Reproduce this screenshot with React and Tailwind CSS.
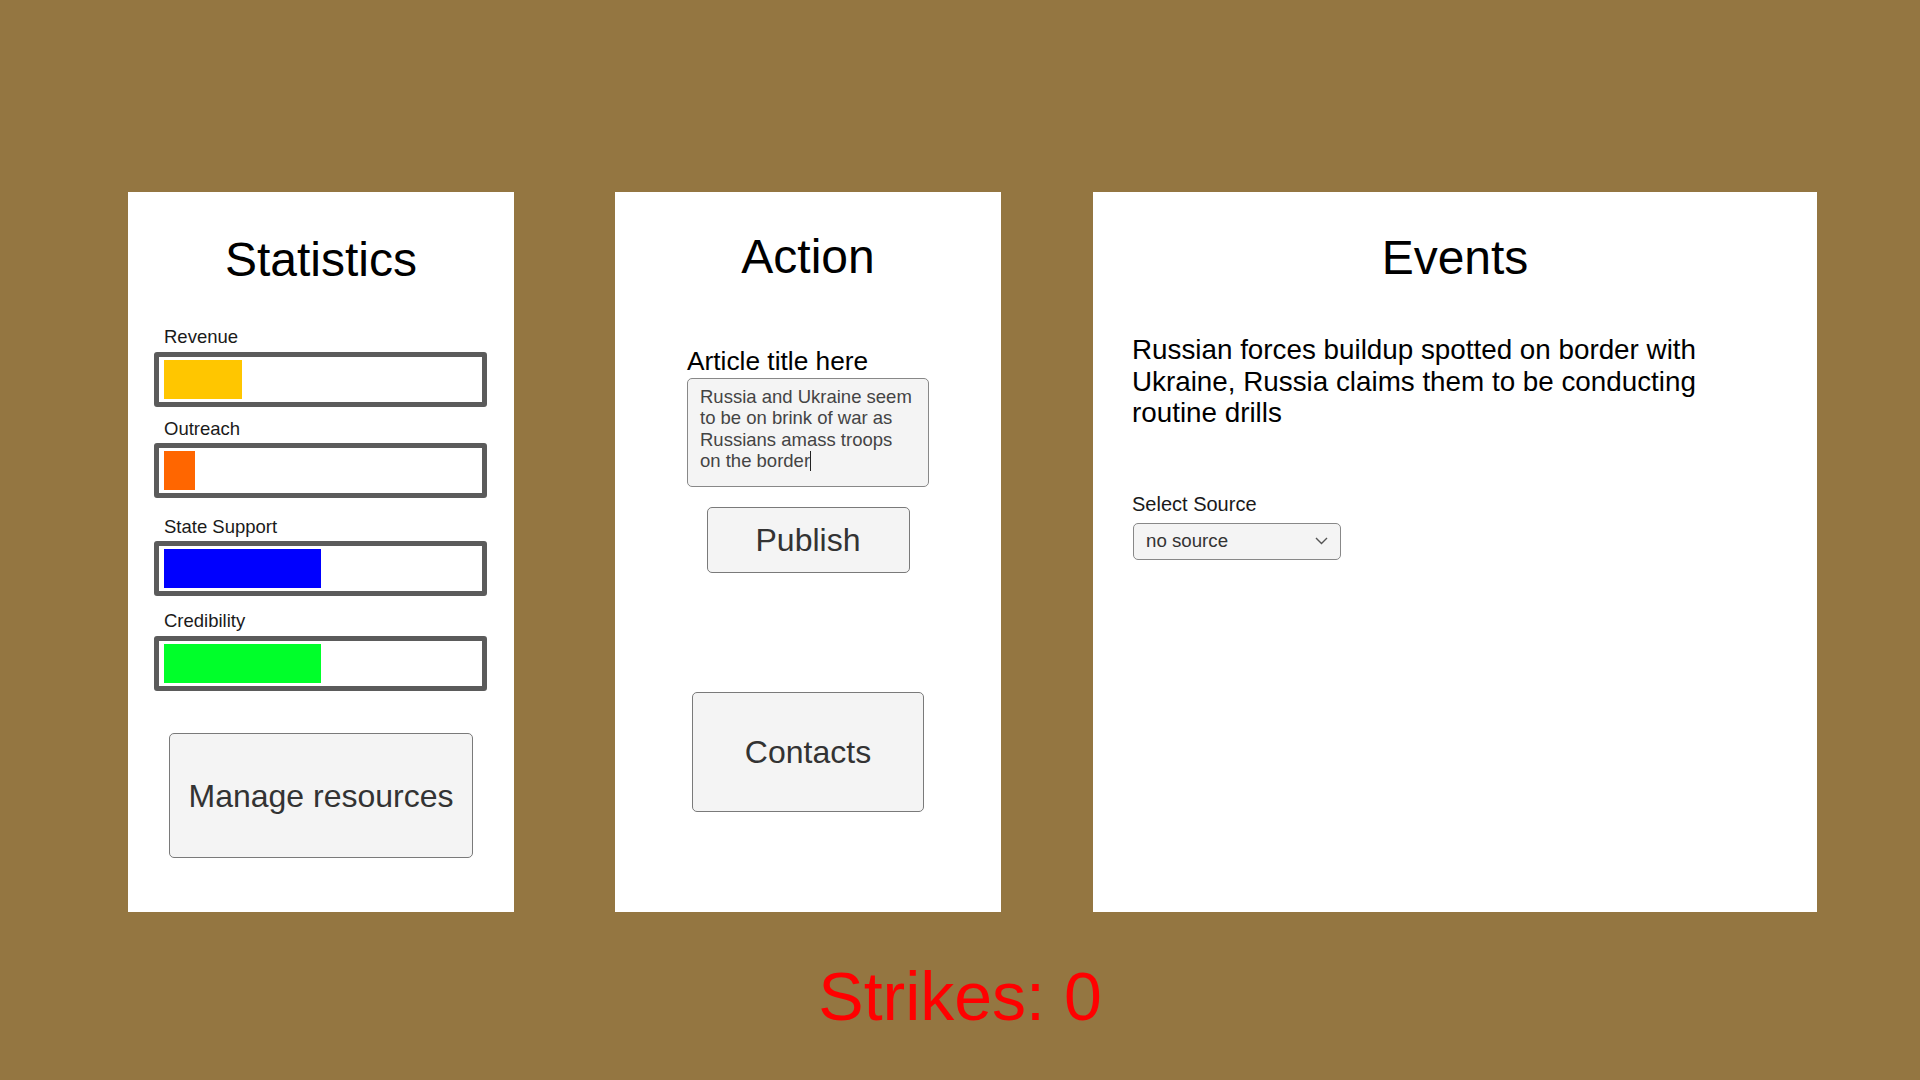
import React from "react";

const FONT = { fontFamily: '"Liberation Sans", Arial, sans-serif' };

function StatBar({ label, fill, color, labelMt, barMt }) {
  return (
    <div className={labelMt}>
      <div className="ml-[10px] text-[18.5px] leading-[20px] text-[#1a1a1a]">{label}</div>
      <div className={`${barMt} h-[55px] w-[333px] rounded-[3px] border-[5px] border-[#5b5b5b] bg-white pl-[5px] py-[3px]`}>
        <div className="h-full" style={{ width: fill, backgroundColor: color }} />
      </div>
    </div>
  );
}

export default function App() {
  return (
    <div className="min-h-screen w-full bg-[#947641] flex flex-col" style={FONT}>
      <div className="flex pl-[128px] pt-[192px]">
        {/* Statistics */}
        <div className="w-[386px] h-[720px] bg-white flex flex-col pt-[40px]">
          <div className="text-center text-[48px] leading-[56px] text-black">Statistics</div>
          <div className="px-[26px]">
            <StatBar label="Revenue" fill={78} color="#ffc600" labelMt="mt-[39px]" barMt="mt-[5px]" />
            <StatBar label="Outreach" fill={31} color="#ff6600" labelMt="mt-[12px]" barMt="mt-[4px]" />
            <StatBar label="State Support" fill={157} color="#0000ff" labelMt="mt-[19px]" barMt="mt-[4px]" />
            <StatBar label="Credibility" fill={157} color="#00ff2a" labelMt="mt-[15px]" barMt="mt-[5px]" />
          </div>
          <div className="mt-[42px] flex justify-center">
            <div className="w-[304px] h-[125px] rounded-[5px] border border-[#7a7a7a] bg-[#f4f4f4] flex items-center justify-center text-[32px] text-[#333]">
              Manage resources
            </div>
          </div>
        </div>

        {/* Action */}
        <div className="ml-[101px] w-[386px] h-[720px] bg-white flex flex-col items-center pt-[37px]">
          <div className="text-center text-[48px] leading-[56px] text-black">Action</div>
          <div className="mt-[61px] w-[242px]">
            <div className="text-[26.3px] leading-[30px] text-black">Article title here</div>
            <div className="mt-[2px] h-[109px] w-[242px] rounded-[5px] border border-[#888] bg-[#f4f4f4] pt-[7px] px-[12px] text-[18.5px] leading-[21.3px] text-[#444]">
              Russia and Ukraine seem to be on brink of war as Russians amass troops on the border
              <span className="inline-block w-px h-[20px] bg-[#222] align-[-4px]" />
            </div>
          </div>
          <div className="mt-[20px] w-[203px] h-[66px] rounded-[5px] border border-[#7a7a7a] bg-[#f4f4f4] flex items-center justify-center text-[32px] text-[#333]">
            Publish
          </div>
          <div className="mt-[119px] w-[232px] h-[120px] rounded-[5px] border border-[#7a7a7a] bg-[#f4f4f4] flex items-center justify-center text-[32px] text-[#333]">
            Contacts
          </div>
        </div>

        {/* Events */}
        <div className="ml-[92px] w-[724px] h-[720px] bg-white flex flex-col pt-[38px] px-[39px]">
          <div className="text-center text-[48px] leading-[56px] text-black">Events</div>
          <div className="mt-[48px] text-[27.8px] leading-[31.5px] text-black">
            Russian forces buildup spotted on border with Ukraine, Russia claims them to be conducting routine drills
          </div>
          <div className="mt-[64px] text-[20px] leading-[22px] text-[#1a1a1a]">Select Source</div>
          <div className="mt-[8px] ml-[1px] h-[37px] w-[208px] rounded-[5px] border border-[#888] bg-[#f4f4f4] flex items-center justify-between pl-[12px] pr-[12px] text-[18.7px] text-[#333]">
            <span>no source</span>
            <svg width="13" height="8" viewBox="0 0 13 8" fill="none">
              <path d="M1 1 L6.5 6.5 L12 1" stroke="#555" strokeWidth="1.4" />
            </svg>
          </div>
        </div>
      </div>

      <div className="mt-[45px] text-center text-[68px] leading-[78px] text-[#ff0000]">Strikes: 0</div>
    </div>
  );
}
